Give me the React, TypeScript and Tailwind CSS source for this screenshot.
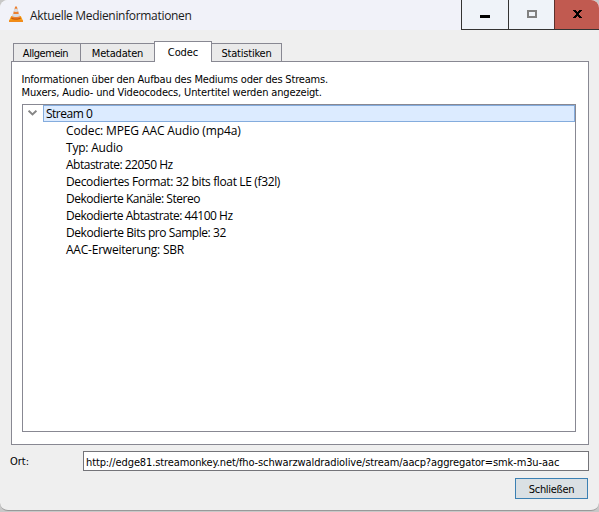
import { useState } from "react";
import clsx from "clsx";

const TABS = [
  { label: "Allgemein", width: "w-[68px] pr-[3px]", tracking: "tracking-[-0.45px]" },
  { label: "Metadaten", width: "w-[74px]", tracking: "tracking-[-0.2px]" },
  { label: "Codec", width: "w-[58px]", tracking: "tracking-[-0.1px]" },
  { label: "Statistiken", width: "w-[70px]", tracking: "tracking-[-0.2px]" },
];

const DETAILS = [
  { text: "Codec: MPEG AAC Audio (mp4a)", tracking: "tracking-[-0.12px]" },
  { text: "Typ: Audio", tracking: "tracking-[-0.2px]" },
  { text: "Abtastrate: 22050 Hz", tracking: "tracking-[-0.5px]" },
  { text: "Decodiertes Format: 32 bits float LE (f32l)", tracking: "tracking-[-0.36px]" },
  { text: "Dekodierte Kanäle: Stereo", tracking: "tracking-[-0.47px]" },
  { text: "Dekodierte Abtastrate: 44100 Hz", tracking: "tracking-[-0.49px]" },
  { text: "Dekodierte Bits pro Sample: 32", tracking: "tracking-[-0.44px]" },
  { text: "AAC-Erweiterung: SBR", tracking: "tracking-[-0.22px]" },
];

const segoe = "font-['Open_Sans','Noto_Sans',sans-serif]";
const tahoma = "font-['DejaVu_Sans_Condensed','DejaVu_Sans',sans-serif] [font-stretch:condensed]";

function ConeIcon() {
  return (
    <svg width="14" height="16" viewBox="0 0 14 16">
      <path d="M2.2 10h9.6L14 14.8v.9H0v-.9z" fill="#f9a01c" />
      <path d="M0 14.6h14v1.2H0z" fill="#ee7d0c" />
      <path d="M2.6 11.2h8.8l.4 1.6c-1.8 1.3-7.8 1.3-9.6 0z" fill="#c9590a" />
      <path d="M6.2.4h1.6l3.2 11c-1 1.3-7 1.3-8 0z" fill="#ec8030" />
      <path d="M5.4 2.8h3.2l.8 2.7c-1 .6-3.8.6-4.8 0z" fill="#d9dce1" />
      <path d="M3.9 7.4c1.5.8 4.7.8 6.2 0l.8 2.8c-1.5 1.1-6.3 1.1-7.8 0z" fill="#d9dce1" />
    </svg>
  );
}

function TitleBar() {
  return (
    <header className="flex h-[30px] shrink-0 bg-[#f1f2f9]">
      <div className="flex flex-1 items-center pl-[9px]">
        <span className="-mt-[2px]">
          <ConeIcon />
        </span>
        <h1 className={clsx("ml-[7px] pt-px text-[12px] tracking-[-0.32px] text-[#1a1a1a]", segoe)}>
          Aktuelle Medieninformationen
        </h1>
      </div>
      <div className="flex border-b border-[#333] bg-[#eff3f9]">
        <button className="flex w-[47px] justify-center border-l border-[#333] pt-[15px]" aria-label="Minimieren">
          <span className="h-[3px] w-[10px] bg-black" />
        </button>
        <button className="flex w-[46px] justify-center border-l border-[#333] pt-[10px]" aria-label="Maximieren">
          <span className="h-2 w-[10px] border-2 border-[#808080]" />
        </button>
        <button className="flex w-[45px] justify-center border-l border-[#5c302c] bg-[#c15a50] pt-[10px]" aria-label="Fenster schließen">
          <svg width="9" height="8" viewBox="0 0 9 8" shapeRendering="crispEdges">
            <path d="M0 0h3v1h1v1h1V1h1V0h3v1H8v1H7v1H6v2h1v1h1v1h1v1H6V7H5V6H4v1H3v1H0V7h1V6h1V5h1V3H2V2H1V1H0z" />
          </svg>
        </button>
      </div>
    </header>
  );
}

export default function App() {
  const [active, setActive] = useState("Codec");

  return (
    <div className="h-[512px] w-[599px] overflow-hidden bg-[#c8c8c8]">
      <div className="flex h-[511px] flex-col overflow-hidden rounded-[8px] border-b border-[#999] bg-[#efefef] text-black">
        <TitleBar />

        <div className={clsx("mt-[11px] ml-[13px] flex h-5 items-end text-[11px]", tahoma)}>
          {TABS.map((tab, i) => (
            <button
              key={tab.label}
              onClick={() => setActive(tab.label)}
              className={clsx(
                "border-t border-r border-[#888892]",
                tab.width,
                tab.tracking,
                i === 0 && "border-l",
                tab.label === active
                  ? "relative z-10 -ml-px mb-[-1px] h-[21px] border-l bg-white leading-[21px]"
                  : "h-[18px] bg-[#eaeaea] leading-[19px]"
              )}
            >
              {tab.label}
            </button>
          ))}
        </div>

        <section className="ml-[11px] flex h-[384px] w-[578px] shrink-0 flex-col border border-[#888892] bg-white pt-[11px] pl-[10px]">
          <div className={clsx("-ml-px h-[31px] pl-[0.5px] text-[11px] leading-[13px] whitespace-nowrap", tahoma)}>
            <p className="tracking-[-0.19px]">Informationen über den Aufbau des Mediums oder des Streams.</p>
            <p className="tracking-[-0.15px]">Muxers, Audio- und Videocodecs, Untertitel werden angezeigt.</p>
          </div>
          <div className={clsx("h-[328px] w-[554px] border border-[#888892] text-[12px] leading-[17px]", segoe)}>
            <div className="flex h-[17px]">
              <div className="flex w-5 shrink-0 pt-[5px] pl-[5px]">
                <svg width="9" height="6" viewBox="0 0 9 6" fill="none" stroke="#858585" strokeWidth="1.9">
                  <path d="M.6.7 4.5 4.5 8.4.7" />
                </svg>
              </div>
              <div className="flex-1 border border-[#84acdd] bg-[#dcebff] pl-[2px] leading-[16px] tracking-[-0.5px]">
                Stream 0
              </div>
            </div>
            <ul className="pl-[43px]">
              {DETAILS.map((d) => (
                <li key={d.text} className={clsx("h-[17px] whitespace-nowrap", d.tracking)}>
                  {d.text}
                </li>
              ))}
            </ul>
          </div>
        </section>

        <div className={clsx("mt-[6px] flex h-5 items-center pl-[10px] text-[11px]", tahoma)}>
          <label htmlFor="ort" className="w-[73px] pt-[2px]">Ort:</label>
          <input
            id="ort"
            readOnly
            value="http://edge81.streamonkey.net/fho-schwarzwaldradiolive/stream/aacp?aggregator=smk-m3u-aac"
            className="h-5 w-[506px] border border-[#747479] bg-white pt-[2px] pl-[2px] tracking-[-0.11px] outline-none"
          />
        </div>

        <button className={clsx("mt-[7px] ml-[515px] h-[21px] w-[73px] border border-[#3b80b3] bg-[#dae0e4] text-[11px] leading-[21px] tracking-[-0.3px]", tahoma)}>
          Schließen
        </button>
      </div>
    </div>
  );
}
